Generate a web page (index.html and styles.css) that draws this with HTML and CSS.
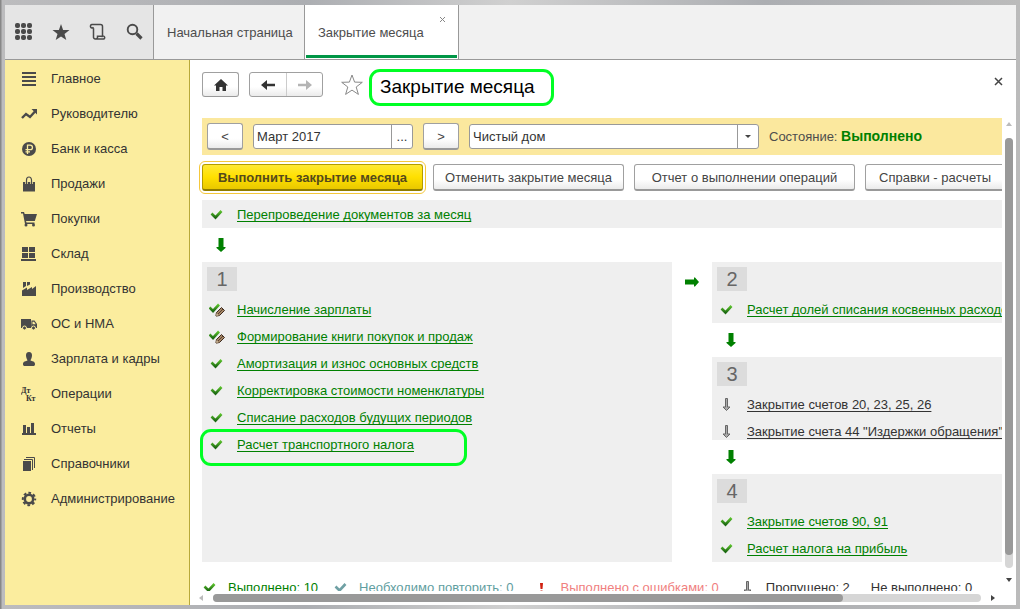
FILE: index.html
```html
<!DOCTYPE html>
<html lang="ru">
<head>
<meta charset="utf-8">
<title>Закрытие месяца</title>
<link rel="stylesheet" href="styles.css">
</head>
<body>
<svg class="sprite" aria-hidden="true">
  <defs>
    <linearGradient id="green" x1="0" y1="0" x2="0" y2="1"><stop offset="0" stop-color="#5cc42c"/><stop offset="1" stop-color="#1d6a12"/></linearGradient>
  </defs>
  <symbol id="check" viewBox="0 0 16 16"><path d="M2.500 6.500 L6.500 10.500 L12.500 4" fill="none" stroke="url(#green)" stroke-width="2.600"/></symbol>
  <symbol id="check-blue" viewBox="0 0 16 16"><path d="M2.500 6.500 L6.500 10.500 L12.500 4" fill="none" stroke="#6fa0a4" stroke-width="2.600"/></symbol>
  <symbol id="check-edit" viewBox="0 0 16 16"><path d="M0.500 5.500 L4 9 L10 2.500" fill="none" stroke="url(#green)" stroke-width="2.600"/><path d="M7 14 L7.500 10.500 L12.500 5.500 L15.500 8.500 L10.500 13.500Z" fill="#a58665" stroke="#3d2b20"/><path d="M9 12 L14 7" stroke="#5a4332"/><path d="M7 14 L7.400 11 L10 13.500Z" fill="#f0e0c0" stroke="#6b5138" stroke-width=".5"/></symbol>
  <symbol id="skip" viewBox="0 0 16 16"><path d="M6.500 1.500h2v8.500h2.500L7.500 13.500 4 10h2.500z" fill="#aaa" stroke="#666" stroke-width="1"/></symbol>
  <symbol id="down" viewBox="0 0 10 14"><path d="M2.500 0h5v9h2v1L5 14L.5 10V9h2z" fill="#008000"/></symbol>
  <symbol id="right" viewBox="0 0 14 10"><path d="M0 2.500h9v-2h1L14 5l-4 4.500H9v-2H0z" fill="#008000"/></symbol>
</svg>
<div class="app">
  <header class="topbar">
    <div class="tools">
      <button class="tool" aria-label="Меню"><svg width="18" height="18" viewBox="0 0 18 18"><g fill="#4a4a4a"><rect x="0" y="0" width="5" height="5" rx="2"/><rect x="6" y="0" width="5" height="5" rx="2"/><rect x="12" y="0" width="5" height="5" rx="2"/><rect x="0" y="6" width="5" height="5" rx="2"/><rect x="6" y="6" width="5" height="5" rx="2"/><rect x="12" y="6" width="5" height="5" rx="2"/><rect x="0" y="12" width="5" height="5" rx="2"/><rect x="6" y="12" width="5" height="5" rx="2"/><rect x="12" y="12" width="5" height="5" rx="2"/></g></svg></button>
      <button class="tool" aria-label="Избранное"><svg width="18" height="18" viewBox="0 0 18 18"><path d="M9 1l2.100 5.900 6.400.1-5 3.900 1.800 6.100L9 13.400 3.700 17l1.800-6.100L.5 7l6.400-.1z" fill="#4a4a4a"/></svg></button>
      <button class="tool" aria-label="История"><svg width="18" height="18" viewBox="0 0 18 18"><path d="M4.500 5.200V13.500a2 2 0 0 0 2 2.500h8.300a1.500 1.500 0 1 0-1.300-2.800V3.500a2 2 0 0 0-2-2H3a1.700 1.700 0 1 0 1.500 2.700M6.500 16c1.200 0 2-.7 2-1.500V13.300H13" fill="none" stroke="#4a4a4a" stroke-width="1.500"/></svg></button>
      <button class="tool" aria-label="Поиск"><svg width="18" height="18" viewBox="0 0 18 18"><circle cx="6.500" cy="6.500" r="4.800" fill="none" stroke="#4a4a4a" stroke-width="1.900"/><path d="M10.500 10.500L15.500 15.500" stroke="#4a4a4a" stroke-width="3.200"/></svg></button>
    </div>
    <nav class="tabs">
      <button class="tab start">Начальная страница</button>
      <div class="tab active">Закрытие месяца<button class="tab-close" aria-label="Закрыть вкладку"><svg width="7" height="7" viewBox="0 0 7 7"><path d="M1 1l5 5M6 1L1 6" stroke="#888"/></svg></button></div>
    </nav>
  </header>
  <div class="body">
    <nav class="sidebar">
      <a class="nav" href="#"><svg class="ni" viewBox="0 0 16 16"><path d="M1 2h14M1 6h14M1 10h14M1 14h14" stroke="#4a4a4a" stroke-width="2"/></svg>Главное</a>
      <a class="nav" href="#"><svg class="ni" viewBox="0 0 16 16"><path d="M1 12l4-4 4 3 5-5.500" fill="none" stroke="#4a4a4a" stroke-width="2.400"/><path d="M10.500 3H16v5.500z" fill="#4a4a4a"/></svg>Руководителю</a>
      <a class="nav" href="#"><svg class="ni" viewBox="0 0 16 16"><circle cx="8" cy="8" r="7" fill="#4a4a4a"/><path d="M6.500 13V4.200h2.700a2.200 2.200 0 0 1 0 4.500H4.500M4.500 10.800H9" fill="none" stroke="#fbed9e" stroke-width="1.300"/></svg>Банк и касса</a>
      <a class="nav" href="#"><svg class="ni" viewBox="0 0 16 16"><path d="M2 6h12v9.500H2z" fill="#4a4a4a"/><path d="M5.500 8V4a2.500 3 0 0 1 5 0v4" fill="none" stroke="#fbed9e" stroke-width="2.600"/><path d="M5.500 8V4a2.500 3 0 0 1 5 0v4" fill="none" stroke="#4a4a4a" stroke-width="1.200"/></svg>Продажи</a>
      <a class="nav" href="#"><svg class="ni" viewBox="0 0 16 16"><path d="M0 1h3l.7 2H16l-2.200 7H5l.5 1.500h8V13H4L2 2.500H0z" fill="#4a4a4a"/><circle cx="5" cy="14" r="1.500" fill="#4a4a4a"/><circle cx="12.500" cy="14" r="1.500" fill="#4a4a4a"/></svg>Покупки</a>
      <a class="nav" href="#"><svg class="ni" viewBox="0 0 16 16"><path d="M1 1h6v5H1zM8 1h6v5H8zM1 7h6v5H1zM8 7h6v5H8zM0 13h15v2H0z" fill="#4a4a4a"/></svg>Склад</a>
      <a class="nav" href="#"><svg class="ni" viewBox="0 0 16 16"><path d="M1 15V9.500l5-3V9l5-3v2l4-3v10zM2 1h3v4L2 7zM6 1h3v2.500L6 5z" fill="#4a4a4a"/></svg>Производство</a>
      <a class="nav" href="#"><svg class="ni" viewBox="0 0 16 16"><path d="M0 3h10v9H0zM10.500 4.500h3L16 8v4h-6z" fill="#4a4a4a"/><path d="M11.500 5.700h1.600l1.600 2.500h-3.200z" fill="#fbed9e"/><circle cx="3.500" cy="12" r="2" fill="#4a4a4a" stroke="#fbed9e"/><circle cx="12.500" cy="12" r="2" fill="#4a4a4a" stroke="#fbed9e"/></svg>ОС и НМА</a>
      <a class="nav" href="#"><svg class="ni" viewBox="0 0 16 16"><path d="M8 1c2.200 0 3 1.500 3 3.500S9.800 8.500 9.500 9.500c1.500.8 4.500.7 4.500 3.500 0 1.500-.5 2-2 2H4c-1.500 0-2-.5-2-2 0-2.800 3-2.700 4.500-3.500C6.200 8.500 5 6.500 5 4.500S5.800 1 8 1z" fill="#4a4a4a"/></svg>Зарплата и кадры</a>
      <a class="nav" href="#"><svg class="ni" viewBox="0 0 16 16"><g class="dtkt"><text x="0" y="7">Дт</text><text x="5" y="15">Кт</text></g></svg>Операции</a>
      <a class="nav" href="#"><svg class="ni" viewBox="0 0 16 16"><path d="M2 4h3v9H2zM6 6h3v7H6zM10 2h3v11h-3zM1 12h14v2H1z" fill="#4a4a4a"/></svg>Отчеты</a>
      <a class="nav" href="#"><svg class="ni" viewBox="0 0 16 16"><path d="M2 5h8v10H2z" fill="#4a4a4a"/><path d="M3 3.500h8.500V14M5 1.500h8.500V12" fill="none" stroke="#4a4a4a"/></svg>Справочники</a>
      <a class="nav" href="#"><svg class="ni" viewBox="0 0 16 16"><circle cx="8" cy="8" r="4.200" fill="none" stroke="#4a4a4a" stroke-width="2.600"/><circle cx="8" cy="8" r="6.200" fill="none" stroke="#4a4a4a" stroke-width="2" stroke-dasharray="2.700 2.170" stroke-dashoffset="1.350"/></svg>Администрирование</a>
    </nav>
    <main class="main">
      <div class="titlebar">
        <button class="btn home" aria-label="Домой"><svg width="16" height="14" viewBox="0 0 16 14"><path d="M8 1l7 6.500h-2V13H9.500V9h-3v4H3V7.500H1z" fill="#333"/></svg></button>
        <div class="pair">
          <button class="arrow" aria-label="Назад"><svg width="16" height="12" viewBox="0 0 16 12"><path d="M1 6l6-5v3.700h8v2.600H7V11z" fill="#333"/></svg></button>
          <button class="arrow" aria-label="Вперед"><svg width="16" height="12" viewBox="0 0 16 12"><path d="M15 6L9 1v3.700H1v2.600h8V11z" fill="#b4b4b4"/></svg></button>
        </div>
        <button class="fav" aria-label="В избранное"><svg width="22" height="22" viewBox="0 0 22 22"><path d="M11 1l2.600 7.100 7.700.2-6.100 4.700 2.200 7.400L11 16.100l-6.400 4.300 2.200-7.400L.7 8.300l7.700-.2z" fill="none" stroke="#888"/></svg></button>
        <h1 class="title">Закрытие месяца</h1>
        <button class="close" aria-label="Закрыть"><svg width="9" height="9" viewBox="0 0 9 9"><path d="M1 1l7 7M8 1L1 8" stroke="#444" stroke-width="1.500"/></svg></button>
      </div>
      <div class="pane">
        <div class="view">
          <div class="filter">
            <button class="btn step">&lt;</button>
            <div class="field month"><input class="text" type="text" value="Март 2017" aria-label="Месяц"><button class="dots" aria-label="Выбрать">...</button></div>
            <button class="btn step">&gt;</button>
            <div class="field org"><select class="text" aria-label="Организация"><option>Чистый дом</option></select></div>
            <p class="state">Состояние: <b class="done">Выполнено</b></p>
          </div>
          <div class="actions">
            <button class="btn primary">Выполнить закрытие месяца</button>
            <button class="btn cancel">Отменить закрытие месяца</button>
            <button class="btn report">Отчет о выполнении операций</button>
            <button class="btn calc">Справки - расчеты</button>
          </div>
          <div class="strip"><svg class="mark"><use href="#check"/></svg><a class="op" href="#">Перепроведение документов за месяц</a></div>
          <svg class="down"><use href="#down"/></svg>
          <div class="stages">
            <section class="stage">
              <h2 class="num">1</h2>
              <div class="row"><svg class="mark"><use href="#check-edit"/></svg><a class="op" href="#">Начисление зарплаты</a></div>
              <div class="row"><svg class="mark"><use href="#check-edit"/></svg><a class="op" href="#">Формирование книги покупок и продаж</a></div>
              <div class="row"><svg class="mark"><use href="#check"/></svg><a class="op" href="#">Амортизация и износ основных средств</a></div>
              <div class="row"><svg class="mark"><use href="#check"/></svg><a class="op" href="#">Корректировка стоимости номенклатуры</a></div>
              <div class="row"><svg class="mark"><use href="#check"/></svg><a class="op" href="#">Списание расходов будущих периодов</a></div>
              <div class="row ringed"><svg class="mark"><use href="#check"/></svg><a class="op" href="#">Расчет транспортного налога</a></div>
            </section>
            <svg class="next"><use href="#right"/></svg>
            <div class="column">
              <section class="stage">
                <h2 class="num">2</h2>
                <div class="row"><svg class="mark"><use href="#check"/></svg><a class="op" href="#">Расчет долей списания косвенных расходов</a></div>
              </section>
              <svg class="down"><use href="#down"/></svg>
              <section class="stage tight">
                <h2 class="num">3</h2>
                <div class="row"><svg class="mark"><use href="#skip"/></svg><a class="op skipped" href="#">Закрытие счетов 20, 23, 25, 26</a></div>
                <div class="row"><svg class="mark"><use href="#skip"/></svg><a class="op skipped" href="#">Закрытие счета 44 "Издержки обращения"</a></div>
              </section>
              <svg class="down"><use href="#down"/></svg>
              <section class="stage">
                <h2 class="num">4</h2>
                <div class="row"><svg class="mark"><use href="#check"/></svg><a class="op" href="#">Закрытие счетов 90, 91</a></div>
                <div class="row"><svg class="mark"><use href="#check"/></svg><a class="op" href="#">Расчет налога на прибыль</a></div>
              </section>
            </div>
          </div>
          <div class="legend">
            <span class="key ok"><svg class="mark"><use href="#check"/></svg>Выполнено: 10</span>
            <span class="key redo"><svg class="mark"><use href="#check-blue"/></svg>Необходимо повторить: 0</span>
            <span class="key bad"><svg class="mark" viewBox="0 0 16 16"><path d="M6 3h3l-.5 6h-2zM6.500 10.500h2v2h-2z" fill="#d02010"/></svg>Выполнено с ошибками: 0</span>
            <span class="key"><svg class="mark"><use href="#skip"/></svg>Пропущено: 2</span>
            <span class="key">Не выполнено: 0</span>
          </div>
        </div>
        <div class="vbar"><i class="tri up"></i><div class="track"><div class="thumb"></div></div><i class="tri dn"></i></div>
        <div class="hbar"><i class="tri lt"></i><div class="track"><div class="thumb"></div></div><i class="tri rt"></i></div>
      </div>
    </main>
  </div>
</div>
</body>
</html>
```
FILE: styles.css
```css
*, *::before, *::after { box-sizing: border-box; }
body {
  margin: 0;
  height: 100vh;
  padding: 5px 4px 4px 5px;
  background: linear-gradient(90deg, #888 0, #888 1px, #bcbcbe 2px, #acaeb2 30%, #d0d0d0 50%, #acaeb2 75%, #bbb 100%);
  font: 13px/16px "Liberation Sans", Arial, sans-serif;
  color: #333;
  overflow: hidden;
}
button, input, select { font: inherit; color: inherit; margin: 0; padding: 0; border: 0; background: none; }
svg { display: block; flex: none; }
.sprite { position: absolute; width: 0; height: 0; }
.app { height: 100%; display: flex; flex-direction: column; background: #fff; }

.topbar { flex: none; height: 55px; display: flex; background: #f1f1f1; border-bottom: 1px solid #999; }
.tools { display: flex; align-items: center; gap: 19px; width: 149px; padding-left: 10px; background: #e5e5e5; border-right: 1px solid #999; }
.tool { width: 18px; height: 18px; }
.tabs { display: flex; color: #4d4d4d; }
.tab { position: relative; padding: 2px 12px 0 13px; line-height: 52px; border-right: 1px solid #999; white-space: nowrap; }
.start { width: 151px; }
.tab.active { width: 154px; background: #fff; }
.tab.active::after { content: ""; position: absolute; left: 1px; right: 1px; bottom: 1px; height: 3px; background: #009646; }
.tab-close { position: absolute; top: 11px; right: 12px; width: 7px; height: 7px; }

.body { flex: 1; min-height: 0; display: flex; }
.sidebar { flex: none; width: 185px; padding-top: 1px; background: #fbed9e; border-right: 1px solid #b8a93a; }
.nav { display: flex; align-items: center; gap: 14px; height: 35px; padding-left: 16px; color: #333; text-decoration: none; }
.ni { width: 16px; height: 16px; }
.dtkt { font: bold 8px "Liberation Serif", serif; fill: #333; }

.main { flex: 1; min-width: 0; display: flex; flex-direction: column; }
.titlebar { flex: none; display: flex; align-items: center; height: 49px; padding: 0 13px 0 12px; }
.btn { height: 27px; padding-top: 1px; border: 1px solid #a0a0a0; border-bottom: 2px solid #999; border-radius: 3px; background: linear-gradient(#fff 60%, #ebebeb); color: #444; white-space: nowrap; }
.home { display: flex; align-items: center; justify-content: center; width: 37px; height: 25px; padding: 0; border-bottom-width: 1px; }
.pair { display: flex; height: 25px; margin-left: 10px; border: 1px solid #a0a0a0; border-radius: 3px; background: linear-gradient(#fff 60%, #ebebeb); }
.arrow { display: flex; align-items: center; justify-content: center; width: 36px; }
.arrow + .arrow { border-left: 1px solid #ccc; }
.fav { margin-left: 18px; }
.title { margin: 5px 0 0 6px; width: 185px; height: 37px; padding-left: 8px; border: 3px solid #00ff24; border-radius: 11px; font-size: 19px; font-weight: 400; line-height: 29px; white-space: nowrap; color: #000; }
.close { margin: 0 0 6px auto; }

.pane { flex: 1; min-height: 0; display: grid; grid-template: minmax(0, 1fr) 14px / minmax(0, 1fr) 14px; padding-left: 9px; }
.view { padding: 9px 0 0 3px; overflow: hidden; }
.filter { display: flex; align-items: center; height: 37px; padding-left: 5px; gap: 10px; background: #fbe89e; }
.step { width: 36px; }
.field { display: flex; height: 25px; border: 1px solid #999; border-radius: 3px; background: #fff; }
.text { flex: 1; min-width: 0; padding: 0 3px; appearance: none; }
.month { width: 160px; }
.dots { width: 21px; border-left: 1px solid #999; }
.org { position: relative; width: 290px; }
.org::before { content: ""; position: absolute; right: 0; top: 0; bottom: 0; width: 21px; border-left: 1px solid #999; pointer-events: none; }
.org::after { content: ""; position: absolute; right: 7px; top: 10px; border: 3px solid transparent; border-top-color: #444; pointer-events: none; }
.state { margin: 0; color: #4d4d4d; white-space: nowrap; }
.done { font-size: 14px; color: #008000; }
.actions { display: flex; gap: 10px; margin-top: 9px; }
.actions .btn { flex: none; }
.actions .primary { width: 221px; border-color: #b39b00 #b39b00 #8f7c00; background: linear-gradient(#ffe935, #ffe000 50%, #e9c800); font-weight: 700; color: #544a1c; outline: 1px solid #f5c83c; outline-offset: 2px; }
.cancel { width: 191px; }
.report { width: 221px; }
.calc { width: 140px; }

.strip { display: flex; align-items: center; height: 28px; margin-top: 9px; padding: 2px 0 0 7px; background: #efefef; }
.mark { width: 16px; height: 16px; margin-right: 12px; }
.op { color: #008000; white-space: nowrap; text-decoration: underline 1px; text-underline-offset: 2px; text-decoration-skip-ink: none; }
.skipped { color: #333; }
.down { width: 10px; height: 14px; margin: 10px 0 10px 14px; }
.stages { display: flex; align-items: stretch; }
.stages > .stage { flex: none; width: 470px; }
.next { width: 14px; height: 10px; margin: 15px 13px 0; }
.column { flex: 1; min-width: 0; }
.stage { padding: 5px 0 5px 5px; background: #efefef; }
.tight { padding-bottom: 0; }
.num { margin: 0; width: 30px; height: 24px; background: #dcdcdc; font-size: 20px; font-weight: 400; line-height: 24px; text-align: center; color: #666; }
.row { position: relative; display: flex; align-items: center; height: 27px; padding: 11px 0 0 2px; }
.ringed::after { content: ""; position: absolute; left: -7px; top: 3px; width: 267px; height: 37px; border: 3px solid #00ff24; border-radius: 11px; }
.legend { display: flex; margin-top: 18px; white-space: nowrap; }
.key { display: flex; align-items: center; margin-right: 21px; }
.key .mark { margin-right: 10px; }
.ok { margin-right: 15px; color: #008000; }
.redo { color: #5f9ea0; }
.bad { color: #f08080; }

.vbar { display: flex; flex-direction: column; align-items: center; padding: 13px 0 9px; }
.vbar .track { flex: 1; width: 8px; margin: 12px 0 10px; }
.vbar .thumb { height: 97%; }
.hbar { display: flex; align-items: center; padding: 0 7px 0 0; }
.hbar .track { flex: 1; height: 8px; margin: 0 10px; }
.hbar .thumb { width: 82%; height: 8px; }
.track { border-radius: 4px; background: #d6d6d6; }
.thumb { border-radius: 4px; background: #999; }
.tri { flex: none; border: 3px solid transparent; }
.up { border-top: 0; border-bottom: 4px solid #bbb; }
.dn { border-bottom: 0; border-top: 4px solid #444; }
.lt { border-left: 0; border-right: 4px solid #bbb; }
.rt { border-right: 0; border-left: 4px solid #444; }
```
